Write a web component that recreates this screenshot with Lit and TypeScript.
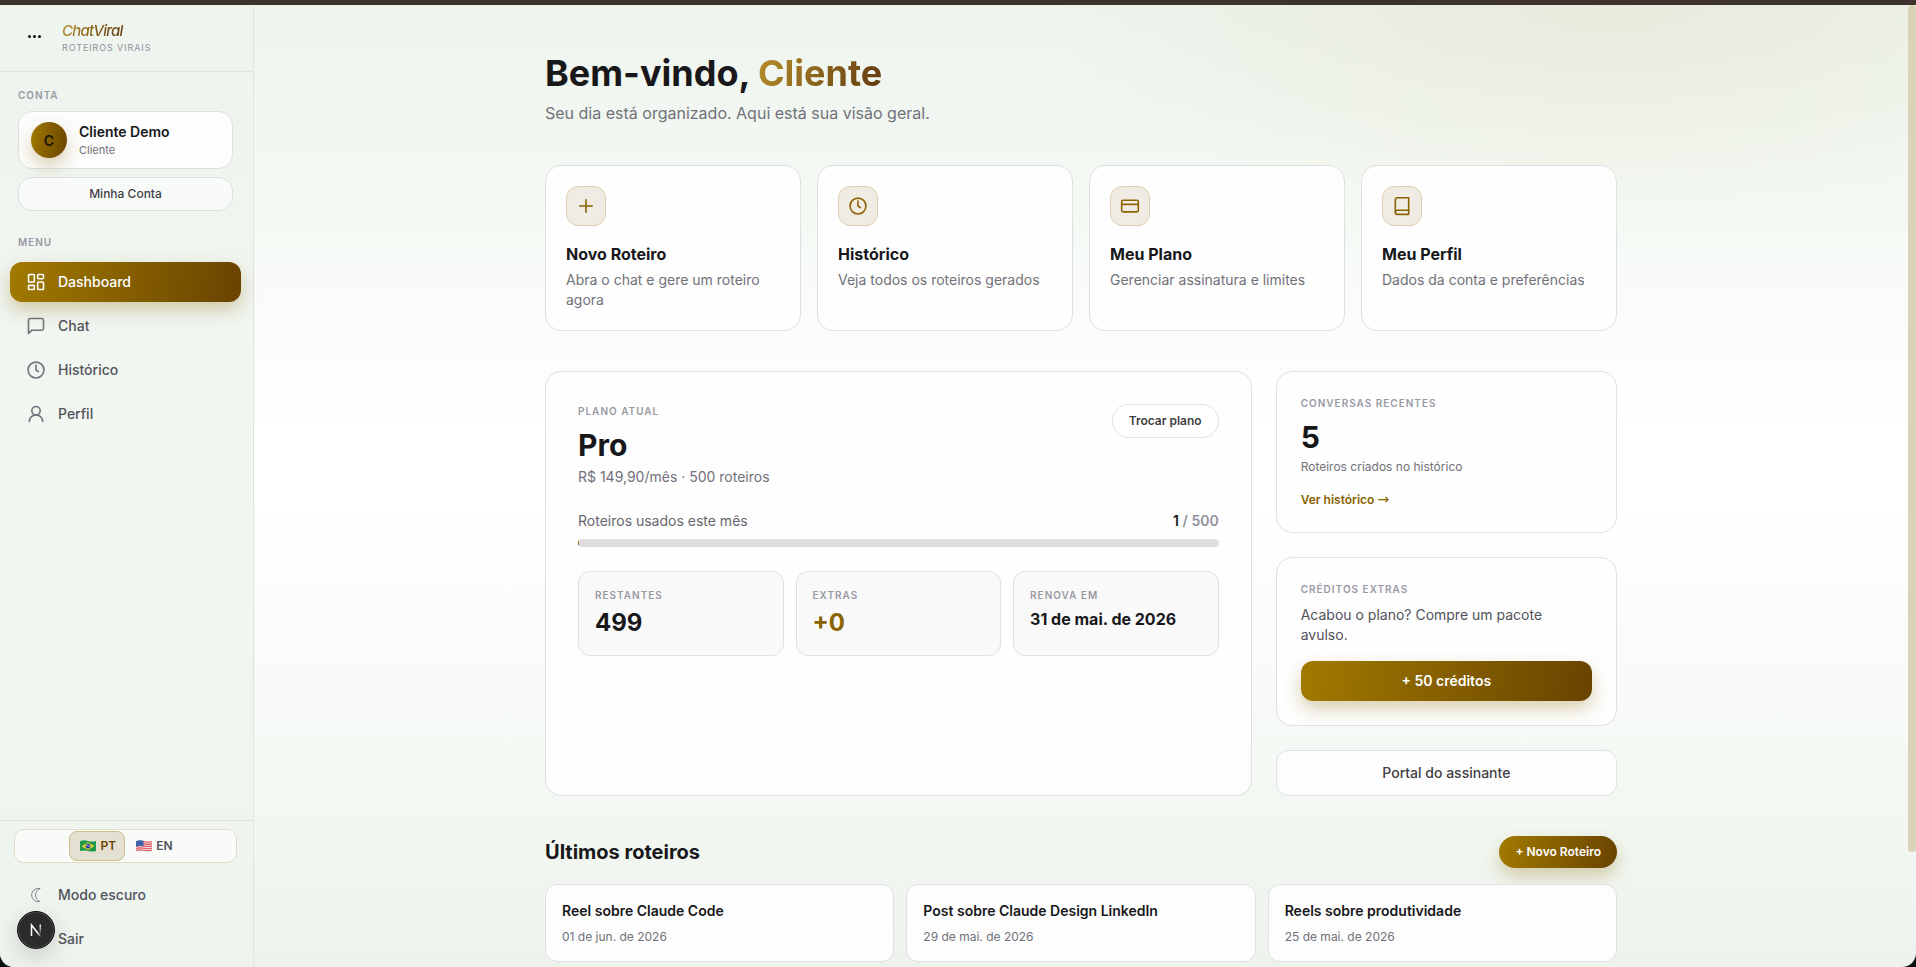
import { LitElement, html, css, svg, type TemplateResult } from "lit";
import { customElement, property, state } from "lit/decorators.js";

const shapes: Record<string, TemplateResult> = {
  dashboard: svg`<rect x="3" y="3" width="7" height="9" rx="1"/><rect x="14" y="3" width="7" height="5" rx="1"/><rect x="14" y="12" width="7" height="9" rx="1"/><rect x="3" y="16" width="7" height="5" rx="1"/>`,
  chat: svg`<path d="M21 15a2 2 0 0 1-2 2H7l-4 4V5a2 2 0 0 1 2-2h14a2 2 0 0 1 2 2z"/>`,
  clock: svg`<circle cx="12" cy="12" r="9.500"/><path d="M12 6v6l3 2"/>`,
  user: svg`<circle cx="12" cy="8" r="5"/><path d="M20 21a8 8 0 0 0-16 0"/>`,
  plus: svg`<path d="M12 4.500v15M4.500 12h15"/>`,
  card: svg`<rect x="2" y="5" width="20" height="14" rx="2"/><path d="M2 10h20"/>`,
  book: svg`<path d="M4 19.5A2.5 2.5 0 0 1 6.5 17H20"/><path d="M6.5 2H20v20H6.5A2.5 2.5 0 0 1 4 19.5v-15A2.5 2.5 0 0 1 6.5 2z"/>`,
  moon: svg`<path d="M16.500 4.200a8 8 0 1 0 0 15.600a8.600 8.600 0 0 1 0-15.600z" stroke-width="1"/>`,
};

@customElement("line-icon")
class LineIcon extends LitElement {
  @property() name = "plus";
  static styles = css`
    :host { display: block; width: 20px; height: 20px; flex: none; }
    svg {
      display: block; width: 20px; height: 20px; fill: none;
      stroke: currentColor; stroke-width: 1.9; stroke-linecap: round; stroke-linejoin: round;
    }
  `;
  render() {
    return html`<svg viewBox="0 0 24 24" aria-hidden="true">${shapes[this.name]}</svg>`;
  }
}

const base = css`
  * { box-sizing: border-box; margin: 0; padding: 0; }
  a { color: inherit; text-decoration: none; }
  button { font: inherit; color: inherit; border: 0; background: none; cursor: pointer; }
  .eyebrow {
    font-size: 10px; line-height: 15px; font-weight: 600; letter-spacing: 0.1em;
    text-transform: uppercase; color: #9999a4;
  }
  .gold {
    background: linear-gradient(100deg, #a17a00, #694300);
    color: #fff;
    box-shadow: 0 8px 18px rgba(138, 98, 0, 0.3);
  }
  .gold-text {
    background: linear-gradient(120deg, #b8902a, #5e3610);
    -webkit-background-clip: text; background-clip: text; color: transparent;
  }
`;

const menu = [
  { icon: "dashboard", label: "Dashboard" },
  { icon: "chat", label: "Chat" },
  { icon: "clock", label: "Histórico" },
  { icon: "user", label: "Perfil" },
];

const brazil = html`<svg class="flag" viewBox="0 0 16 12" aria-hidden="true">
  <path d="M0 1.2C3 0 5 .2 8 .9s5 .7 8 0v10c-3 .8-5 .7-8 0s-5-.7-8 .2z" fill="#1f9a4a"/>
  <path d="M1.6 6.2 8 2.2l6.4 3.7L8 9.9z" fill="#f5cf2b"/>
  <circle cx="8" cy="6" r="2.5" fill="#274a9c"/>
  <path d="M5.7 5.3c1.700-.2 3.400.2 4.600 1.500" stroke="#e8eefc" stroke-width=".6" fill="none"/>
</svg>`;

const usa = html`<svg class="flag" viewBox="0 0 16 12" aria-hidden="true">
  <path d="M0 1.200C3 0 5 .2 8 .9s5 .7 8 0v10c-3 .8-5 .7-8 0s-5-.7-8 .2z" fill="#f3dede"/>
  <path d="M0 2C3 .8 5 1 8 1.700s5 .7 8 0M0 4.200C3 3 5 3.200 8 3.900s5 .7 8 0M0 6.400C3 5.200 5 5.400 8 6.100s5 .7 8 0M0 8.600C3 7.400 5 7.600 8 8.300s5 .7 8 0M0 10.600C3 9.400 5 9.600 8 10.300s5 .7 8 0" stroke="#dd5560" stroke-width="1.100" fill="none"/>
  <path d="M0 1.200C3 0 5 .2 7.500.8v5.500C5 5.700 3 5.500 0 6.700z" fill="#3a62a8"/>
</svg>`;

@customElement("app-sidebar")
class AppSidebar extends LitElement {
  @state() private lang = "PT";
  static styles = [base, css`
    :host {
      display: flex; flex-direction: column; width: 254px; flex: none;
      border-right: 1px solid #e3e5da; background: rgba(238, 244, 237, 0.8);
    }
    header {
      display: flex; align-items: center; gap: 10px; height: 67px; padding: 0 16px;
      border-bottom: 1px solid #e1e4d6;
    }
    .dots { width: 36px; height: 6px; display: flex; justify-content: center; gap: 2px; }
    .dots i { width: 3px; height: 3px; border-radius: 50%; background: #151515; }
    .brand { font-size: 15px; line-height: 20px; font-weight: 500; font-style: italic; letter-spacing: -0.05em; width: fit-content; }
    .tagline { font-size: 9px; line-height: 14px; letter-spacing: 0.1em; color: #92929e; }
    .account { padding: 16px 20px 0 18px; }
    .profile {
      display: flex; align-items: center; gap: 12px; margin-top: 8px; padding: 10px 12px;
      border: 1px solid #dedfe3; border-radius: 14px; background: rgba(255, 255, 255, 0.8);
    }
    .avatar {
      width: 36px; height: 36px; border-radius: 50%; display: grid; place-items: center;
      font-size: 14px; font-weight: 600; color: #1a1400;
    }
    .name { font-size: 14px; line-height: 20px; font-weight: 600; color: #18181b; }
    .role { font-size: 11px; line-height: 16px; color: #71717a; }
    .mine {
      width: 100%; margin-top: 8px; padding: 8px; border: 1px solid #dedfe3; border-radius: 14px;
      background: rgba(255, 255, 255, 0.6); font-size: 12px; line-height: 16px; font-weight: 500; color: #3f3f46;
    }
    .menu-title { padding: 24px 18px 12px; }
    nav, .tools { display: flex; flex-direction: column; gap: 4px; padding: 0 12px 0 10px; }
    .item {
      display: flex; align-items: center; gap: 12px; height: 40px; padding: 0 16px; border-radius: 12px;
      font-size: 14px; line-height: 20px; font-weight: 500; color: #52525b; text-align: left;
    }
    .item line-icon { color: #71717a; }
    .item.gold, .item.gold line-icon { color: #fff; }
    .blank { width: 20px; }
    footer { margin-top: auto; border-top: 1px solid #dee2df; padding: 8px 0; }
    .lang {
      display: flex; justify-content: center; height: 34px; margin: 0 16px 12px 14px; padding: 1px;
      border: 1px solid #e2dcc6; border-radius: 10px; background: rgba(255, 255, 255, 0.6);
    }
    .lang button {
      display: flex; align-items: center; gap: 4px; padding: 0 8px 0 10px; border: 1px solid transparent; border-radius: 8px;
      font-size: 12px; line-height: 16px; font-weight: 600; color: #52525b;
    }
    .lang button[aria-pressed="true"] { background: #e5e1d2; border-color: #cdbd8c; color: #694300; }
    .flag { width: 16px; height: 12px; display: block; }
  `];
  private pick(code: string, flag: TemplateResult) {
    return html`<button aria-pressed=${this.lang === code ? "true" : "false"} @click=${() => (this.lang = code)}>${flag}${code}</button>`;
  }
  render() {
    return html`
      <header>
        <div class="dots"><i></i><i></i><i></i></div>
        <div>
          <div class="brand gold-text">ChatViral</div>
          <div class="tagline">ROTEIROS VIRAIS</div>
        </div>
      </header>
      <section class="account">
        <div class="eyebrow">Conta</div>
        <div class="profile">
          <div class="avatar gold">C</div>
          <div><div class="name">Cliente Demo</div><div class="role">Cliente</div></div>
        </div>
        <button class="mine">Minha Conta</button>
      </section>
      <div class="eyebrow menu-title">Menu</div>
      <nav>
        ${menu.map((m, i) => html`<a href="#" class="item ${i === 0 ? "gold" : ""}"><line-icon name=${m.icon}></line-icon>${m.label}</a>`)}
      </nav>
      <footer>
        <div class="lang">${this.pick("PT", brazil)}${this.pick("EN", usa)}</div>
        <div class="tools">
          <button class="item"><line-icon name="moon"></line-icon>Modo escuro</button>
          <button class="item"><span class="blank"></span>Sair</button>
        </div>
      </footer>
    `;
  }
}

const shortcuts = [
  { icon: "plus", title: "Novo Roteiro", text: "Abra o chat e gere um roteiro agora" },
  { icon: "clock", title: "Histórico", text: "Veja todos os roteiros gerados" },
  { icon: "card", title: "Meu Plano", text: "Gerenciar assinatura e limites" },
  { icon: "book", title: "Meu Perfil", text: "Dados da conta e preferências" },
];

const scripts = [
  { title: "Reel sobre Claude Code", date: "01 de jun. de 2026" },
  { title: "Post sobre Claude Design LinkedIn", date: "29 de mai. de 2026" },
  { title: "Reels sobre produtividade", date: "25 de mai. de 2026" },
];

@customElement("app-dashboard")
class AppDashboard extends LitElement {
  private used = 1;
  private total = 500;
  static styles = [base, css`
    :host { display: block; flex: 1; min-width: 0; overflow-y: auto; scrollbar-width: none; }
    main { max-width: 1152px; margin: 0 auto; padding: 48px 40px 130px; }
    h1 { font-size: 36px; line-height: 40px; font-weight: 700; color: #18181b; }
    .lead { margin-top: 8px; font-size: 16px; line-height: 24px; color: #71717a; }
    .panel { border: 1px solid #dfe0e3; border-radius: 16px; background: rgba(254, 254, 254, 0.88); }
    .shortcuts { display: grid; grid-template-columns: repeat(4, 1fr); gap: 16px; margin-top: 40px; }
    .shortcut { padding: 20px; }
    .tile {
      width: 40px; height: 40px; display: grid; place-items: center; border-radius: 12px;
      border: 1px solid #dccfb0; background: #f1ece3; color: #8a6200;
    }
    h3 { margin-top: 16px; font-size: 16px; line-height: 24px; font-weight: 700; color: #18181b; }
    .shortcut p { margin-top: 4px; font-size: 14px; line-height: 20px; color: #71717a; }
    .overview { display: grid; grid-template-columns: repeat(3, 1fr); gap: 24px; margin-top: 40px; }
    .plan { grid-column: span 2; padding: 32px; }
    .plan-head { display: flex; justify-content: space-between; align-items: flex-start; }
    .big { margin-top: 8px; font-size: 30px; line-height: 36px; font-weight: 700; color: #18181b; }
    .price { margin-top: 4px; font-size: 14px; line-height: 20px; color: #71717a; }
    .pill { padding: 8px 16px; border-radius: 17px; font-size: 12px; line-height: 16px; font-weight: 600; }
    .outline { border: 1px solid #dfe0e3; background: #fff; color: #3f3f46; }
    .usage { display: flex; justify-content: space-between; margin-top: 24px; font-size: 14px; line-height: 20px; color: #66666f; }
    .count { font-weight: 600; color: #92929e; }
    .count b { font-weight: 600; color: #18181b; }
    .track { height: 8px; margin-top: 8px; border-radius: 4px; overflow: hidden; background: #dedee0; }
    .fill { height: 100%; background: #8a6200; }
    .stats { display: grid; grid-template-columns: repeat(3, 1fr); gap: 12px; margin-top: 24px; }
    .stat { padding: 16px; border: 1px solid #dfe0e3; border-radius: 12px; background: #f9f9f9; }
    .value { margin-top: 4px; font-size: 24px; line-height: 32px; font-weight: 700; color: #18181b; }
    .value.extra { color: #8a6200; }
    .value.date { font-size: 16px; line-height: 24px; }
    .side { display: flex; flex-direction: column; gap: 24px; }
    .side .panel { padding: 24px; }
    .note { margin-top: 4px; font-size: 12px; line-height: 16px; color: #71717a; }
    .more { display: block; margin-top: 16px; font-size: 12px; line-height: 17px; font-weight: 600; color: #8a6200; }
    .arrow { font-family: "DejaVu Sans", sans-serif; font-size: 14px; line-height: 12px; font-weight: 400; }
    .offer { margin-top: 8px; font-size: 14px; line-height: 20px; color: #52525b; }
    .buy { width: 100%; margin-top: 16px; padding: 10px; border-radius: 12px; font-size: 14px; line-height: 20px; font-weight: 600; }
    .portal { padding: 12px; border-radius: 12px; font-size: 14px; line-height: 20px; font-weight: 500; background: #fdfdfd; }
    .latest { display: flex; justify-content: space-between; align-items: center; margin-top: 40px; }
    h2 { font-size: 20px; line-height: 28px; font-weight: 700; color: #18181b; }
    .scripts { display: grid; grid-template-columns: repeat(3, 1fr); gap: 12px; margin-top: 16px; }
    .script { padding: 16px; border-radius: 12px; }
    .script h4 { font-size: 14px; line-height: 20px; font-weight: 600; color: #18181b; }
    .script p { margin-top: 8px; font-size: 12px; line-height: 16px; color: #71717a; }
  `];
  render() {
    return html`<main>
      <h1>Bem-vindo, <span class="gold-text">Cliente</span></h1>
      <p class="lead">Seu dia está organizado. Aqui está sua visão geral.</p>
      <section class="shortcuts">
        ${shortcuts.map((s) => html`<a href="#" class="panel shortcut">
          <div class="tile"><line-icon name=${s.icon}></line-icon></div>
          <h3>${s.title}</h3><p>${s.text}</p></a>`)}
      </section>
      <section class="overview">
        <article class="panel plan">
          <div class="plan-head">
            <div>
              <div class="eyebrow">Plano atual</div>
              <div class="big">Pro</div>
              <p class="price">R$ 149,90/mês · 500 roteiros</p>
            </div>
            <button class="pill outline">Trocar plano</button>
          </div>
          <div class="usage"><span>Roteiros usados este mês</span><span class="count"><b>${this.used}</b> / ${this.total}</span></div>
          <div class="track" role="progressbar" aria-label="Roteiros usados este mês" aria-valuenow=${this.used} aria-valuemax=${this.total}>
            <div class="fill" style="width:${(this.used / this.total) * 100}%"></div>
          </div>
          <div class="stats">
            <div class="stat"><div class="eyebrow">Restantes</div><div class="value">499</div></div>
            <div class="stat"><div class="eyebrow">Extras</div><div class="value extra">+0</div></div>
            <div class="stat"><div class="eyebrow">Renova em</div><div class="value date">31 de mai. de 2026</div></div>
          </div>
        </article>
        <div class="side">
          <article class="panel">
            <div class="eyebrow">Conversas recentes</div>
            <div class="big">5</div>
            <p class="note">Roteiros criados no histórico</p>
            <a href="#" class="more">Ver histórico <span class="arrow">→</span></a>
          </article>
          <article class="panel">
            <div class="eyebrow">Créditos extras</div>
            <p class="offer">Acabou o plano? Compre um pacote avulso.</p>
            <button class="buy gold">+ 50 créditos</button>
          </article>
          <button class="portal outline">Portal do assinante</button>
        </div>
      </section>
      <section>
        <div class="latest"><h2>Últimos roteiros</h2><button class="pill gold">+ Novo Roteiro</button></div>
        <div class="scripts">
          ${scripts.map((s) => html`<a href="#" class="panel script"><h4>${s.title}</h4><p>${s.date}</p></a>`)}
        </div>
      </section>
    </main>`;
  }
}

@customElement("app-root")
class AppRoot extends LitElement {
  static styles = [base, css`
    :host {
      display: flex; flex-direction: column; height: 100vh; overflow: hidden; position: relative;
      background: #04100d; font-family: Inter, "Liberation Sans", sans-serif;
      -webkit-font-smoothing: antialiased;
    }
    .strip { height: 5px; flex: none; background: #3d322c; }
    .shell {
      flex: 1; min-height: 0; display: flex; overflow: hidden; border-radius: 0 0 14px 14px;
      background:
        radial-gradient(ellipse 560px 220px at 84% 0, rgba(190, 170, 100, 0.14), transparent),
        linear-gradient(180deg, #eef4ee 0, #f3f8f2 18%, #fff 44%, #fff 52%, #f2f7f1 86%, #edf3ec 100%);
    }
    .scroll { width: 8px; flex: none; }
    .thumb { height: 88%; border-radius: 4px; background: #d8d3b9; }
    .dev {
      position: absolute; left: 17px; bottom: 18px; width: 38px; height: 38px; border-radius: 50%;
      background: #2b2b2b; border: 1px solid #111; box-shadow: inset 0 0 0 1px #4a4a4a, 0 8px 24px rgba(0, 0, 0, 0.16);
      display: grid; place-items: center;
    }
    .dev svg { width: 14px; height: 14px; display: block; }
  `];
  render() {
    return html`
      <div class="strip"></div>
      <div class="shell">
        <app-sidebar></app-sidebar>
        <app-dashboard></app-dashboard>
        <div class="scroll"><div class="thumb"></div></div>
      </div>
      <button class="dev" aria-label="Next.js">
        <svg viewBox="0 0 14 14" fill="none" stroke-width="1.500">
          <defs>
            <linearGradient id="fade" x1="0" y1="1" x2="0" y2="11" gradientUnits="userSpaceOnUse"><stop stop-color="#fff"/><stop offset="1" stop-color="#fff" stop-opacity="0.100"/></linearGradient>
            <linearGradient id="diag" x1="5" y1="4" x2="13" y2="14" gradientUnits="userSpaceOnUse"><stop offset=".5" stop-color="#fff"/><stop offset="1" stop-color="#fff" stop-opacity="0"/></linearGradient>
          </defs>
          <path d="M2.500 13V2L11.500 13.500" stroke="url(#diag)"/>
          <path d="M11.300 1.500v9" stroke="url(#fade)"/>
        </svg>
      </button>
    `;
  }
}
